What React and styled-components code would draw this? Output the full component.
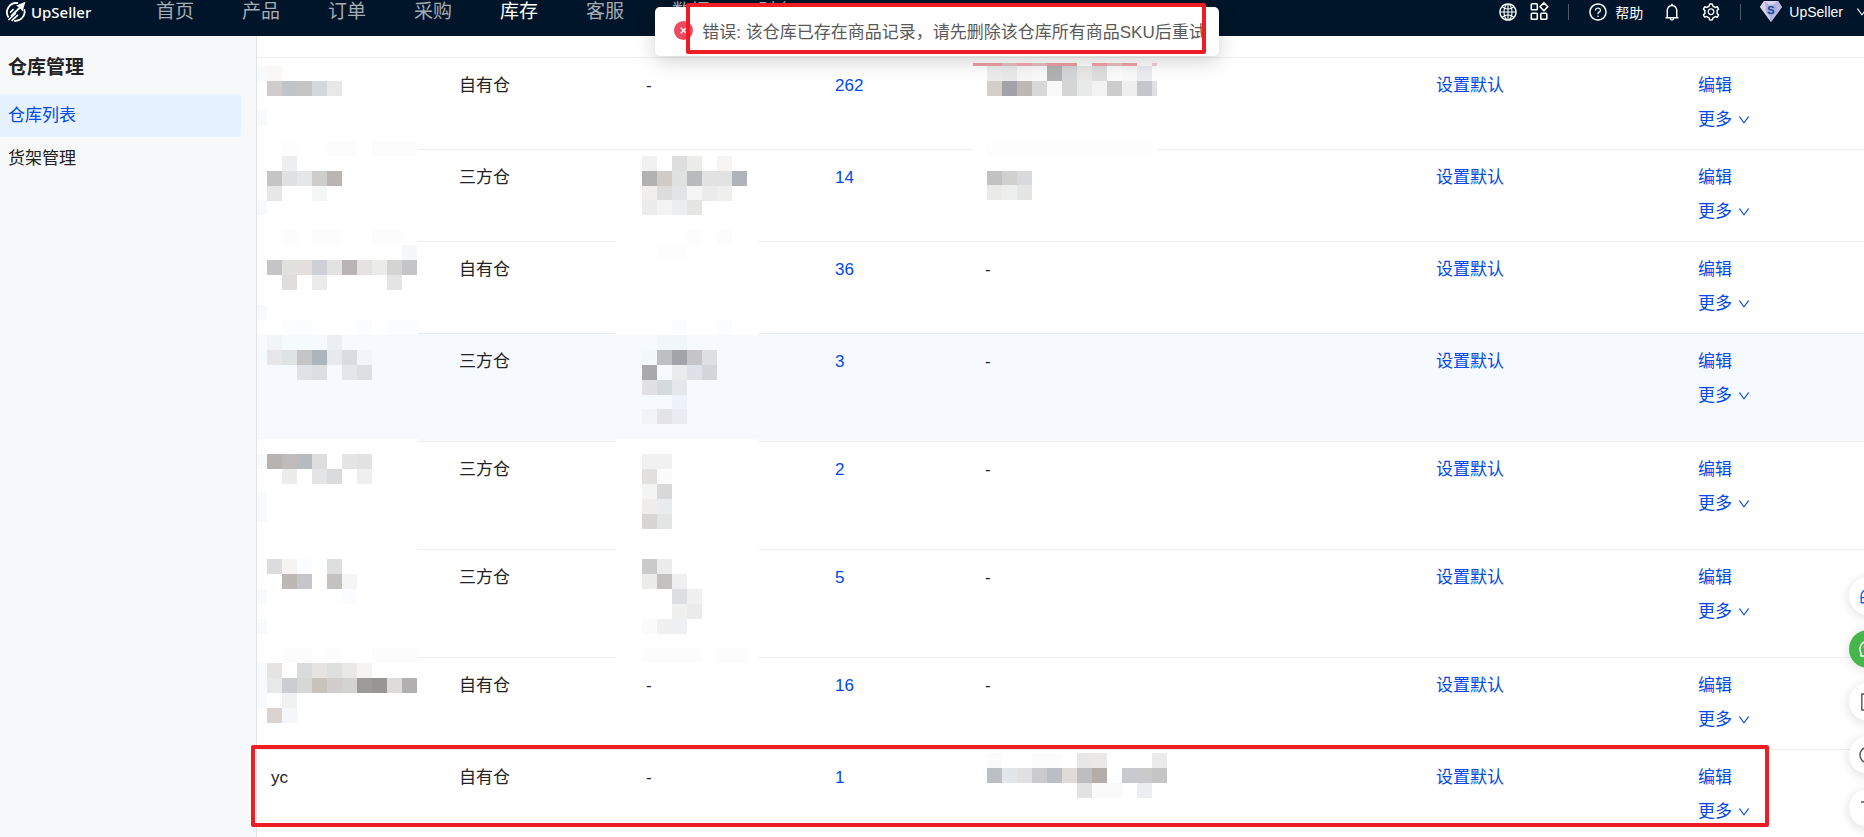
import React from 'react'
import styled, { createGlobalStyle } from 'styled-components'
import {
  AiOutlineGlobal,
  AiOutlineQuestionCircle,
  AiOutlineBell,
  AiOutlineSetting,
  AiOutlineDown,
  AiOutlineCustomerService,
  AiOutlineWhatsApp,
  AiOutlineFileText,
  AiOutlineClockCircle,
  AiOutlineVerticalAlignTop,
} from 'react-icons/ai'

const CELL = 15

const nav = ['首页', '产品', '订单', '采购', '库存', '客服', '数据', '财务']

// wipe: [x, y, width, height], rows: [y, colours], "-" leaves a cell open
const warehouses = [
  {
    type: '自有仓',
    count: 262,
    name: {
      wipe: [0, 91, 161, 1],
      edge: [8, 53],
      rows: [
        [8, 'f9f8f7'],
        [23, 'd0cccb c1c5ca c5c5c5 d5d8db e8e8e8'],
        [83, '- fdfdfd - - fcfcfc fcfcfc - fcfcfc fcfcfc fcfcfc'],
      ],
    },
    provider: '-',
    remark: {
      wipe: [2, 91, 184, 1],
      x: 16,
      strip: 'ef9fa4 efa0a5 e9bcc1 efaab0 e9bcc1 ef9fa4 ef9fa4 - f2a3a8 e9bcc1 f2a3a8 - f0d0d4',
      tail: [181, 23, 5, 15, '#dfdfe4'],
      rows: [
        [8, 'ececec e9e9e9 f6f6f6 fafafa b2b2b2 d5d6d8 e9e8e6 dedede fbfbfb f9f9f9 ebedf0'],
        [23, 'd5cfcb a2a3a9 bdb8b4 d8d8d8 f9f9f9 d5d5d5 e7eae9 f3f3f3 cccccc efefef c5c6cc'],
        [83, 'fdfdfd fdfdfd fdfdfd fdfdfd fdfdfd fdfdfd fdfdfd fdfdfd fdfdfd fdfdfd fdfdfd'],
      ],
    },
  },
  {
    type: '三方仓',
    count: 14,
    name: {
      wipe: [0, 91, 161, 1],
      edge: [50],
      rows: [
        [6, '- eceef0'],
        [21, 'c5c5c5 e0e1e3 e4e6e8 cfcdcb bab5b2'],
        [36, 'e7e7e7 - - f5f6f8'],
        [80, '- fcfcfc - fcfcfc fcfcfc - - fcfcfc fcfcfc'],
      ],
    },
    provider: {
      wipe: [-16, 91, 143, 1],
      rows: [
        [6, 'f1f1f1 - dedede ececea - f6f5f4'],
        [21, 'b2b2b2 d1cbc7 dfe2e0 b9babc e2e2e2 e2e2e2 b0b4b8'],
        [36, 'f0efee dcdcdc e3e4e8 f5f5f5 ebebeb efefed'],
        [50, 'ececec f3f3f3 ebedf0 e5e5e3'],
        [80, '- - - fcfcfc - fcfcfc'],
      ],
    },
    remark: {
      x: 16,
      rows: [
        [21, 'c2c2c2 d0d1ce d9dade'],
        [35, 'eaeae8 ecefee e5e5e3'],
      ],
    },
  },
  {
    type: '自有仓',
    count: 36,
    name: {
      wipe: [0, 91, 161, 2],
      edge: [63],
      rows: [
        [3, '- - - - - - - - - f6f7f9'],
        [18, 'c5c5c8 e1e1df e3dfdc cfd0d6 e2e2e3 b8b4b5 e5e3e2 ebebe9 d4d5d2 c5c5c7'],
        [33, '- dedddb - ebebeb - - - - e4e4e4'],
        [78, '- fcfdfe fafcfe - - - fafcfe - fafcfe fafcfe'],
      ],
    },
    provider: {
      wipe: [-16, 91, 143, 2],
      rows: [
        [3, '- fdfdfd fdfdfd'],
        [78, '- - fafcfe - - fafcfe'],
      ],
    },
    remark: '-',
  },
  {
    type: '三方仓',
    count: 3,
    tall: true,
    active: true,
    name: {
      wipe: [0, 105, 161, 3],
      rows: [
        [1, 'f2f5f7 f5fafc f5fafc - ebeef2'],
        [16, 'e7e7e9 dfe3e4 c5c5c5 adb5bc e6e9ee d9dce0 f1f5f8'],
        [31, '- - dfe2e7 dbdfe1 - e3e7ea dce0e2'],
      ],
    },
    provider: {
      wipe: [-16, 105, 143, 3],
      rows: [
        [1, '- f0f6f9 f0f6f9'],
        [16, 'f3f8fb bdc0c3 a2a4aa c5c5c9 dde0e2'],
        [31, 'a9a9ab - eaebec dfe1e8 d3d6db'],
        [46, 'e1e1e3 d5dadf e4e7ec'],
        [61, '- - edf1fa'],
        [75, 'f0f4f6 e4e4e6 e9ecf1'],
      ],
    },
    remark: '-',
  },
  {
    type: '三方仓',
    count: 2,
    tall: true,
    name: {
      wipe: [0, 107, 161, 1],
      edge: [12, 50, 65],
      rows: [
        [12, 'b7b3b0 bfbbbb b7bbbf dedee0 - e5e5e5 e2e2e2'],
        [27, '- ececea - e4e4e6 dadbdd - efefef'],
      ],
    },
    provider: {
      wipe: [-16, 107, 143, 1],
      rows: [
        [12, 'f1f1f1 f1f1f1'],
        [27, 'e2e1df fbfbfb'],
        [42, 'f3f5f4 d8d8d8'],
        [57, 'efeceb eaebec'],
        [72, 'd8d6d5 e3e5e4'],
      ],
    },
    remark: '-',
  },
  {
    type: '三方仓',
    count: 5,
    tall: true,
    name: {
      wipe: [0, 107, 161, 1],
      edge: [39, 69],
      rows: [
        [9, 'dcdcde f5f4f3 fafcff - dcdfdd'],
        [24, '- bdb8b5 c5c5ca - c3c2c1 f5f5f5'],
        [39, '- - - - - fafcff'],
        [98, '- fcfcfc fcfcfc - fcfcfc - - fcfcfc fcfcfc fcfcfc'],
      ],
    },
    provider: {
      wipe: [-16, 107, 143, 1],
      rows: [
        [9, 'cacaca ececec'],
        [24, 'ececea c3c2c0 f0f0f0'],
        [39, '- - dddee2 f0f0f0'],
        [54, '- - f0f0ee ebebeb'],
        [69, 'fbfbfb f0f0f0 eff0f3'],
        [98, 'fcfcfc fcfcfc fcfcfc fcfcfc - fcfcfc fcfcfc'],
      ],
    },
    remark: '-',
  },
  {
    type: '自有仓',
    count: 16,
    name: {
      edge: [5, 20, 35],
      rows: [
        [5, 'e5e4e2 - dadbdc e6e4e3 dde0de e8e8e6 f5f4f2'],
        [20, 'e7e8e8 cbcdd1 d7d8d6 c8c3bd d2cecd d3d3d1 9c9b9a 979695 dddcdb b1afb0'],
        [35, '- f0f1f1'],
        [50, 'd9d4d1 f5f6f9'],
      ],
    },
    provider: '-',
    remark: '-',
  },
  {
    type: '自有仓',
    count: 1,
    marked: true,
    name: 'yc',
    provider: '-',
    remark: {
      x: 16,
      rows: [
        [3, 'fbfbfb - - fcfcfc fcfcfc - e7e7e7 eae9e7 - - - ebebeb'],
        [18, 'bcc0c5 e1e6ea e1e1e1 cbcbcd bcbec5 e0dbd8 bcbec0 b5aea8 - c7cacf cacaca c5c5c5'],
        [33, '- - - - - - e2e2e2 fafafa fafafa - ebedf0'],
      ],
    },
  },
]

const Mosaic = ({ x = 10, wipe, edge = [], strip, tail, rows }) => (
  <MosaicSvg width="1" height="1" aria-hidden="true">
    {wipe && <rect x={wipe[0]} y={wipe[1]} width={wipe[2]} height={wipe[3]} fill="#fff" />}
    {tail && <rect x={tail[0]} y={tail[1]} width={tail[2]} height={tail[3]} fill={tail[4]} />}
    {edge.map((y) => (
      <rect key={y} x="0" y={y} width="10" height={CELL} fill="#f8f9fb" />
    ))}
    {strip &&
      strip.split(' ').map((color, i) => {
        // the first and last cells are cut by the column edges
        const left = i === 0 ? 2 : x + (i - 1) * CELL
        const width = i === 0 ? 14 : i === 12 ? 5 : CELL
        return color !== '-' && <rect key={i} x={left} y="5" width={width} height="3" fill={`#${color}`} />
      })}
    {rows.map(([y, colors]) =>
      colors.split(' ').map(
        (color, i) =>
          color !== '-' && (
            <rect key={`${y}-${i}`} x={x + i * CELL} y={y} width={CELL} height={CELL} fill={`#${color}`} />
          )
      )
    )}
  </MosaicSvg>
)

const Cell = ({ value, children }) =>
  typeof value === 'string' ? (
    <Td>
      {value}
      {children}
    </Td>
  ) : (
    <Td $masked>
      <Mosaic {...value} />
    </Td>
  )

const LogoMark = () => (
  <svg width="22" height="22" viewBox="0 0 22 22" fill="none" aria-hidden="true">
    <path d="M13 2.2A9.2 9.2 0 0 0 3.6 16.4" stroke="#fff" strokeWidth="1.8" />
    <path d="M19.2 8.2A9.2 9.2 0 0 1 9 19.8" stroke="#fff" strokeWidth="1.8" />
    <path d="M20.5.8 11 4.6l2.8 1.6-8.4 8.2 1.4 1.2 8.7-8 2 3z" fill="#fff" />
    <path d="M10.8 12.2 3.4 19M13 13.8l-6.4 6M5 11.6l3.6-3.4" stroke="#fff" strokeWidth="1.6" />
  </svg>
)

const AppsIcon = () => (
  <svg width="19" height="19" viewBox="0 0 19 19" fill="none" stroke="#fff" strokeWidth="1.6" aria-hidden="true">
    <rect x="1.3" y="1.8" width="6" height="6" rx="0.8" />
    <rect x="1.3" y="11.3" width="6" height="6" rx="0.8" />
    <rect x="10.8" y="11.3" width="6" height="6" rx="0.8" />
    <path d="m13.9.9 3.9 3.9-3.9 3.9L10 4.8z" strokeLinejoin="round" />
  </svg>
)

const Gem = () => (
  <svg width="22" height="21" viewBox="0 0 22 21" aria-hidden="true">
    <path d="M4 0h14l4 6-11 15L0 6z" fill="#b3b0dc" />
    <path d="M4 0h14l-7 5z" fill="#dcd6f2" />
    <path d="M0 6 4 0l3 9 4 12z" fill="#d9d2ee" />
    <path d="m22 6-4-6-3 9-4 12z" fill="#b9b6e0" />
    <circle cx="11" cy="9" r="5.5" fill="#a5b4e0" />
    <text x="11" y="13" textAnchor="middle" fontSize="11" fontWeight="700" fill="#1c3f94" fontFamily="Liberation Sans, sans-serif">
      S
    </text>
  </svg>
)

const App = () => (
  <Page>
    <GlobalStyle />
    <Header>
      <Brand href="#">
        <LogoMark />
        UpSeller
      </Brand>
      <Nav>
        {nav.map((item) => (
          <NavLink key={item} href="#" $active={item === '库存'}>
            {item}
          </NavLink>
        ))}
      </Nav>
      <Tools>
        <ToolPair>
          <Tool aria-label="语言">
            <AiOutlineGlobal size={20} />
          </Tool>
          <Tool aria-label="应用">
            <AppsIcon />
          </Tool>
        </ToolPair>
        <Divider />
        <Tool>
          <AiOutlineQuestionCircle size={20} />
          帮助
        </Tool>
        <Tool aria-label="通知">
          <AiOutlineBell size={20} />
        </Tool>
        <Tool aria-label="设置">
          <AiOutlineSetting size={20} />
        </Tool>
        <Divider />
        <ToolPair>
          <Tool>
            <Gem />
            UpSeller
          </Tool>
          <AiOutlineDown size={14} />
        </ToolPair>
      </Tools>
    </Header>

    <Body>
      <Sidebar>
        <SideTitle>仓库管理</SideTitle>
        <SideLink href="#" $active>
          仓库列表
        </SideLink>
        <SideLink href="#">货架管理</SideLink>
      </Sidebar>
      <Main>
        <TableTop />
        <Table>
          <colgroup>
            <Col $width={188} />
            <Col $width={187} />
            <Col $width={189} />
            <Col $width={150} />
            <Col />
            <Col $width={262} />
            <Col $width={180} />
          </colgroup>
          <tbody>
            {warehouses.map((row, i) => (
              <Row key={i} $tall={row.tall} $active={row.active} $marked={row.marked}>
                <Cell value={row.name}>{row.marked && <RowMark />}</Cell>
                <Td>{row.type}</Td>
                <Cell value={row.provider} />
                <Td>
                  <Link href="#">{row.count}</Link>
                </Td>
                <Cell value={row.remark} />
                <Td>
                  <Action>设置默认</Action>
                </Td>
                <Td>
                  <Actions>
                    <Action>编辑</Action>
                    <Action>
                      更多
                      <AiOutlineDown size={14} />
                    </Action>
                  </Actions>
                </Td>
              </Row>
            ))}
          </tbody>
        </Table>
      </Main>
    </Body>

    <ToastLayer>
      <Toast role="alert">
        <ToastIcon viewBox="0 0 19 19" aria-hidden="true">
          <circle cx="9.5" cy="9.5" r="9.5" fill="#f04a63" />
          <path d="m6.7 6.7 5.6 5.6m0-5.6-5.6 5.6" stroke="#fff" strokeWidth="1.5" />
        </ToastIcon>
        错误: 该仓库已存在商品记录，请先删除该仓库所有商品SKU后重试
        <ToastMark />
      </Toast>
    </ToastLayer>

    <Floats>
      <FloatButton aria-label="客服" $color="#1a5cf0">
        <AiOutlineCustomerService size={20} />
      </FloatButton>
      <FloatButton aria-label="WhatsApp" $color="#fff" $background="#45b649">
        <AiOutlineWhatsApp size={20} />
      </FloatButton>
      <FloatButton aria-label="文档">
        <AiOutlineFileText size={20} />
      </FloatButton>
      <FloatButton aria-label="记录">
        <AiOutlineClockCircle size={20} />
      </FloatButton>
      <FloatButton aria-label="回到顶部">
        <AiOutlineVerticalAlignTop size={20} />
      </FloatButton>
    </Floats>
  </Page>
)

export default App

const GlobalStyle = createGlobalStyle`
  * {
    box-sizing: border-box;
  }
  body {
    margin: 0;
    font-family: 'Liberation Sans', 'Noto Sans CJK SC', sans-serif;
    font-size: 17px;
    color: #222;
  }
  a {
    text-decoration: none;
  }
  button {
    padding: 0;
    border: 0;
    background: none;
    font: inherit;
    cursor: pointer;
  }
`

const Page = styled.div`
  position: relative;
  display: flex;
  flex-direction: column;
  height: 100vh;
  overflow: hidden;
`

const Header = styled.header`
  display: flex;
  flex: none;
  align-items: center;
  height: 36px;
  padding: 0 0 13px 5px;
  background: #001529;
  color: #fff;
`

const Brand = styled.a`
  display: flex;
  align-items: center;
  gap: 4px;
  width: 151px;
  color: #fff;
  font-family: 'Noto Sans', sans-serif;
  font-size: 15px;
  font-weight: 500;
  line-height: 22px;
`

const Nav = styled.nav`
  display: flex;
  gap: 48px;
`

const NavLink = styled.a`
  color: ${(props) => (props.$active ? '#fff' : '#a6adb4')};
  font-size: 19px;
  line-height: 22px;
`

const Tools = styled.div`
  display: flex;
  align-items: center;
  flex: none;
  gap: 19px;
  margin: 0 -5px 0 auto;
`

const ToolPair = styled.div`
  display: flex;
  align-items: center;
  gap: 12px;
`

const Tool = styled.button`
  display: flex;
  align-items: center;
  gap: 7px;
  height: 20px;
  color: #fff;
  font-size: 14px;
`

const Divider = styled.span`
  width: 1px;
  height: 16px;
  background: #4d5b69;
`

const Body = styled.div`
  display: flex;
  flex: 1;
  min-height: 0;
`

const Sidebar = styled.aside`
  flex: none;
  width: 257px;
  padding: 17px 15px 0 0;
  border-right: 1px solid #e4e5e7;
  background: #f7f8fa;
`

const SideTitle = styled.h1`
  margin: 0 0 11px;
  padding-left: 8px;
  font-size: 19px;
  line-height: 30px;
`

const SideLink = styled.a`
  display: block;
  padding: 1px 0 0 8px;
  border-radius: 0 4px 4px 0;
  background: ${(props) => (props.$active ? '#e6f2ff' : 'none')};
  color: ${(props) => (props.$active ? '#0049e6' : '#222')};
  line-height: 42px;
`

const Main = styled.main`
  flex: 1;
  min-width: 0;
  background: #fff;
`

const TableTop = styled.div`
  height: 22px;
  border-bottom: 1px solid #ededef;
`

const Table = styled.table`
  width: 100%;
  table-layout: fixed;
  border-collapse: separate;
  border-spacing: 0;
`

const Col = styled.col`
  width: ${(props) => (props.$width ? `${props.$width}px` : 'auto')};
`

const Row = styled.tr`
  position: ${(props) => (props.$marked ? 'relative' : 'static')};
  height: ${(props) => (props.$tall ? 108 : 92)}px;
  background: ${(props) => (props.$active ? '#f6faff' : 'none')};
`

const Td = styled.td`
  position: ${(props) => (props.$masked ? 'relative' : 'static')};
  padding: 11px 14px 0;
  border-bottom: 1px solid #ededef;
  line-height: 34px;
  vertical-align: top;
`

const MosaicSvg = styled.svg`
  position: absolute;
  top: 0;
  left: 0;
  overflow: visible;
  shape-rendering: crispEdges;
`

const Link = styled.a`
  color: #0049e6;
`

const Actions = styled.div`
  display: flex;
  flex-direction: column;
  align-items: flex-start;
`

const Action = styled.button`
  display: flex;
  align-items: center;
  gap: 5px;
  height: 34px;
  color: #0049e6;
`

const RowMark = styled.div`
  position: absolute;
  top: -5px;
  right: 95px;
  left: -6px;
  z-index: 1;
  height: 82px;
  border: 4px solid #ee1c25;
  border-radius: 2px;
`

const ToastLayer = styled.div`
  position: absolute;
  top: 7px;
  right: 0;
  left: 10px;
  display: flex;
  justify-content: center;
  pointer-events: none;
`

const Toast = styled.div`
  position: relative;
  display: flex;
  align-items: center;
  gap: 9px;
  height: 49px;
  padding: 0 13px 2px 19px;
  border-radius: 5px;
  background: #fff;
  box-shadow: 0 5px 20px rgba(0, 0, 0, 0.18);
  color: #595959;
  white-space: nowrap;
`

const ToastIcon = styled.svg`
  width: 19px;
  height: 19px;
`

const ToastMark = styled.div`
  position: absolute;
  top: -4px;
  right: 13px;
  bottom: 2px;
  left: 31px;
  border: 4px solid #ee1c25;
  border-radius: 2px;
`

const Floats = styled.div`
  position: absolute;
  right: -23px;
  bottom: 10px;
  display: flex;
  flex-direction: column;
  gap: 15px;
`

const FloatButton = styled.button`
  display: flex;
  align-items: center;
  justify-content: center;
  width: 38px;
  height: 38px;
  border-radius: 50%;
  background: ${(props) => props.$background || '#fff'};
  box-shadow: 0 2px 12px rgba(0, 0, 0, 0.14);
  color: ${(props) => props.$color || '#555'};
`
